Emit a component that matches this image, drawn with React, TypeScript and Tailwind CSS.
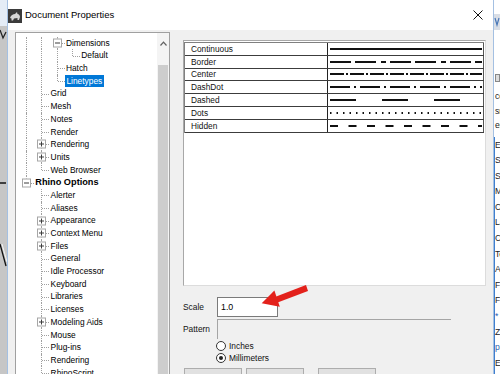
import React from "react";

type Row = {
  label: string;
  depth: number;
  guides: number[];
  last?: boolean;
  exp?: "+" | "-";
  bold?: boolean;
  sel?: boolean;
};

const rows: Row[] = [
  { label: "Dimensions", depth: 2, guides: [0, 1], exp: "-" },
  { label: "Default", depth: 3, guides: [0, 1, 2], last: true },
  { label: "Hatch", depth: 2, guides: [0, 1] },
  { label: "Linetypes", depth: 2, guides: [0, 1], last: true, sel: true },
  { label: "Grid", depth: 1, guides: [0] },
  { label: "Mesh", depth: 1, guides: [0] },
  { label: "Notes", depth: 1, guides: [0] },
  { label: "Render", depth: 1, guides: [0] },
  { label: "Rendering", depth: 1, guides: [0], exp: "+" },
  { label: "Units", depth: 1, guides: [0], exp: "+" },
  { label: "Web Browser", depth: 1, guides: [0], last: true },
  { label: "Rhino Options", depth: 0, guides: [], last: true, exp: "-", bold: true },
  { label: "Alerter", depth: 1, guides: [] },
  { label: "Aliases", depth: 1, guides: [] },
  { label: "Appearance", depth: 1, guides: [], exp: "+" },
  { label: "Context Menu", depth: 1, guides: [], exp: "+" },
  { label: "Files", depth: 1, guides: [], exp: "+" },
  { label: "General", depth: 1, guides: [] },
  { label: "Idle Processor", depth: 1, guides: [] },
  { label: "Keyboard", depth: 1, guides: [] },
  { label: "Libraries", depth: 1, guides: [] },
  { label: "Licenses", depth: 1, guides: [] },
  { label: "Modeling Aids", depth: 1, guides: [], exp: "+" },
  { label: "Mouse", depth: 1, guides: [] },
  { label: "Plug-ins", depth: 1, guides: [] },
  { label: "Rendering", depth: 1, guides: [] },
  { label: "RhinoScript", depth: 1, guides: [] },
];

const linetypes = [
  { name: "Continuous", dash: "" },
  { name: "Border", dash: "21 4 21 5 5 4" },
  { name: "Center", dash: "14 2 2 2" },
  { name: "DashDot", dash: "20 4 2 4" },
  { name: "Dashed", dash: "26 26" },
  { name: "Dots", dash: "1.5 5" },
  { name: "Hidden", dash: "8 10.5" },
];

const sideLetters = ["Edit", "Snap", "SmartTrack", "Menu", "Cplane", "Layer", "Curve", "Text", "Arc", "Fillet", "Freeform", "*", "Zoom", "pan", "End"];

const Cell = ({ kind, exp }: { kind: "pass" | "tee" | "end" | "blank"; exp?: "+" | "-" }) => (
  <div className="relative h-full w-[15.3px] shrink-0">
    {kind === "pass" && <span className="absolute left-[7px] top-0 h-full border-l border-dotted border-[#a0a0a0]" />}
    {kind === "tee" && <span className="absolute left-[7px] top-0 h-full border-l border-dotted border-[#a0a0a0]" />}
    {kind === "end" && <span className="absolute left-[7px] top-0 h-1/2 border-l border-dotted border-[#a0a0a0]" />}
    {(kind === "tee" || kind === "end") && (
      <span className="absolute left-[8px] top-1/2 w-[7px] border-t border-dotted border-[#a0a0a0]" />
    )}
    {exp && (
      <span className="absolute left-[3px] top-1/2 flex h-[9px] w-[9px] -translate-y-1/2 items-center justify-center border border-[#a6a6a6] bg-white">
        <span className="relative h-px w-[5px] bg-[#3c3c3c]">
          {exp === "+" && <span className="absolute left-[2px] top-[-2px] h-[5px] w-px bg-[#3c3c3c]" />}
        </span>
      </span>
    )}
  </div>
);

const TreeRow = ({ row }: { row: Row }) => {
  const cells = [];
  for (let l = 0; l < row.depth; l++) {
    cells.push(<Cell key={l} kind={row.guides.includes(l) ? "pass" : "blank"} />);
  }
  cells.push(<Cell key="own" kind={row.last ? "end" : "tee"} exp={row.exp} />);
  return (
    <div className="flex h-[12.7px] items-center">
      {cells}
      <span
        className={
          row.sel
            ? "ml-0 bg-[#0078d7] px-[1.5px] leading-[12px] text-white"
            : row.bold
            ? "ml-[1px] text-[9.2px] font-bold text-black"
            : "ml-[1px] text-black"
        }
      >
        {row.label}
      </span>
    </div>
  );
};

export default function App() {
  return (
    <div
      className="relative flex h-[374px] w-[500px] overflow-hidden bg-white text-[8.4px] leading-none"
      style={{ fontFamily: '"Liberation Sans", Arial, sans-serif' }}
    >
      {/* left strip: viewport behind the dialog */}
      <div className="flex w-[7px] shrink-0 flex-col">
        <div className="h-[26px] bg-[#e4ecf6]" />
        <div className="relative flex-1 bg-[#c6c6c6]">
          <svg className="absolute left-0 top-0" width="7" height="348" viewBox="0 26 7 348">
            <path d="M0 30 L3 38 L6 32" stroke="#222" strokeWidth="1.3" fill="none" />
            <line x1="0" y1="183" x2="6" y2="183" stroke="#111" strokeWidth="1.5" />
            <path d="M0 244 L6 266" stroke="#111" strokeWidth="1.3" fill="none" />
            <path d="M2 244 L7 262" stroke="#fff" strokeWidth="0.8" fill="none" />
          </svg>
        </div>
      </div>

      {/* dialog */}
      <div className="flex w-[487px] shrink-0 flex-col border-x border-[#a4c0e2] bg-[#f0f0f0]">
        <div className="flex h-[30px] shrink-0 items-center bg-white pl-0 pr-[5px]">
          <svg width="14" height="14" viewBox="0 0 14 14" className="mt-[2px]">
            <rect width="14" height="14" fill="#3b3b3b" />
            <path d="M2 9 C3 6 5 5 7 5 L9 3 L9.5 5 C11 5 12 6.5 12 8 L11 11 L9.5 11 L9.5 9 L6 9.5 L5 11.5 L3.5 11.5 L3.5 9.5 Z" fill="#d8d8d8" />
          </svg>
          <span className="ml-[3px] text-[9.5px] text-black">Document Properties</span>
          <svg width="10" height="10" viewBox="0 0 10 10" className="ml-auto mr-[5px]">
            <path d="M0.5 0.5 L9.5 9.5 M9.5 0.5 L0.5 9.5" stroke="#111" strokeWidth="1" />
          </svg>
        </div>

        <div className="flex flex-1">
          {/* tree */}
          <div className="ml-[7px] mt-[2px] flex h-[360px] w-[155px] shrink-0 border border-[#a0a0a0] bg-white">
            <div className="flex-1 overflow-hidden pl-[3px] pt-[3.6px]">
              {rows.map((r, i) => (
                <TreeRow key={i} row={r} />
              ))}
            </div>
            <div className="flex w-[12px] flex-col bg-[#f4f4f4]">
              <div className="flex h-[20px] items-center justify-center">
                <svg width="7" height="5" viewBox="0 0 7 5">
                  <path d="M0.5 4.5 L3.5 1.2 L6.5 4.5" stroke="#606060" strokeWidth="1.2" fill="none" />
                </svg>
              </div>
              <div className="h-[12px]" />
              <div className="mx-[1px] flex-1 bg-[#cdcdcd]" />
            </div>
          </div>

          {/* right column */}
          <div className="ml-[13px] flex w-[303px] flex-col pt-[10px]">
            <div className="h-[246px] shrink-0 border border-[#a8a8a8] border-b-[#dcdcdc] border-r-[#dcdcdc] bg-white pt-[1px]">
              <div className="mr-[1px] border-l border-t border-[#808080]">
                {linetypes.map((lt) => (
                  <div key={lt.name} className="flex h-[12.8px] border-b border-[#3c3c3c]">
                    <div className="flex w-[143px] items-center border-r border-[#222] pl-[6px] text-[8.3px] text-[#111]">
                      {lt.name}
                    </div>
                    <div className="flex flex-1 items-center border-r border-[#555] pl-[2px]">
                      <svg width="152" height="10" viewBox="0 0 152 10">
                        <line x1="0" y1="5" x2="152" y2="5" stroke="#111" strokeWidth="1.8" strokeDasharray={lt.dash || undefined} />
                      </svg>
                    </div>
                  </div>
                ))}
              </div>
            </div>

            <div className="mt-[11px] flex h-[20px] items-center">
              <span className="w-[34px] text-[#111]">Scale</span>
              <div className="flex h-[20px] w-[61px] items-center border border-[#7a7a7a] bg-white pl-[3px] text-[8.8px] text-black">
                1.0
              </div>
            </div>

            <div className="mt-[2px] flex h-[20px] items-center">
              <span className="w-[34px] text-[#111]">Pattern</span>
              <div className="h-[20px] w-[234px] border-l border-t border-[#a5a5a5] bg-[#f0f0f0]" />
            </div>

            <div className="ml-[32.5px] mt-[1px] flex flex-col">
              <div className="flex h-[12px] items-center">
                <span className="h-[10px] w-[10px] rounded-full border border-[#333] bg-white" />
                <span className="ml-[3.5px] text-[#111]">Inches</span>
              </div>
              <div className="flex h-[12px] items-center">
                <span className="flex h-[10px] w-[10px] items-center justify-center rounded-full border border-[#333] bg-white">
                  <span className="h-[4px] w-[4px] rounded-full bg-[#222]" />
                </span>
                <span className="ml-[3.5px] text-[#111]">Millimeters</span>
              </div>
            </div>

            <div className="ml-[1px] mt-[4px] flex">
              <div className="h-[22px] w-[58px] border border-[#adadad] bg-[#e1e1e1]" />
              <div className="ml-[4px] h-[22px] w-[58px] border border-[#adadad] bg-[#e1e1e1]" />
              <div className="ml-[14px] h-[22px] w-[58px] border border-[#adadad] bg-[#e1e1e1]" />
            </div>
          </div>
        </div>
      </div>

      {/* right strip: another window */}
      <div className="flex w-[6px] shrink-0 flex-col overflow-hidden">
        <div className="h-[14px] bg-white" />
        <div className="h-[16px] bg-[#d9dee6]">
          <svg width="6" height="16" viewBox="0 0 6 16">
            <path d="M1 4 L3 11 L5 4" stroke="#4a78b8" strokeWidth="1.2" fill="none" />
          </svg>
        </div>
        <div className="flex h-[107px] flex-col bg-white pl-[1px] text-[8.6px] text-[#222]">
          <div className="h-[44px]" />
          <span className="h-[8px] w-[5px] border border-[#888] bg-[#ddd]" />
          <span className="mt-[10px] whitespace-nowrap">con</span>
          <span className="mt-[6px] whitespace-nowrap">snap</span>
          <span className="mt-[6px] whitespace-nowrap">end</span>
        </div>
        <div className="flex flex-1 flex-col border-l border-[#3f7fcf] bg-white text-[8.6px] text-[#222]">
          {sideLetters.map((w, i) => (
            <span key={i} className={"flex h-[15.6px] items-center whitespace-nowrap " + (w === "*" || w === "pan" ? "text-[#2a5db0]" : "")}>
              {w}
            </span>
          ))}
        </div>
      </div>

      {/* red annotation arrow */}
      <svg className="pointer-events-none absolute left-[255px] top-[282px]" width="60" height="32" viewBox="255 282 60 32">
        <polygon points="308,291 306,285 275.6,296.8 277.6,302.4" fill="#e3211b" />
        <polygon points="261.7,303.3 279.8,306.8 274.4,290.6" fill="#e3211b" />
      </svg>
    </div>
  );
}
